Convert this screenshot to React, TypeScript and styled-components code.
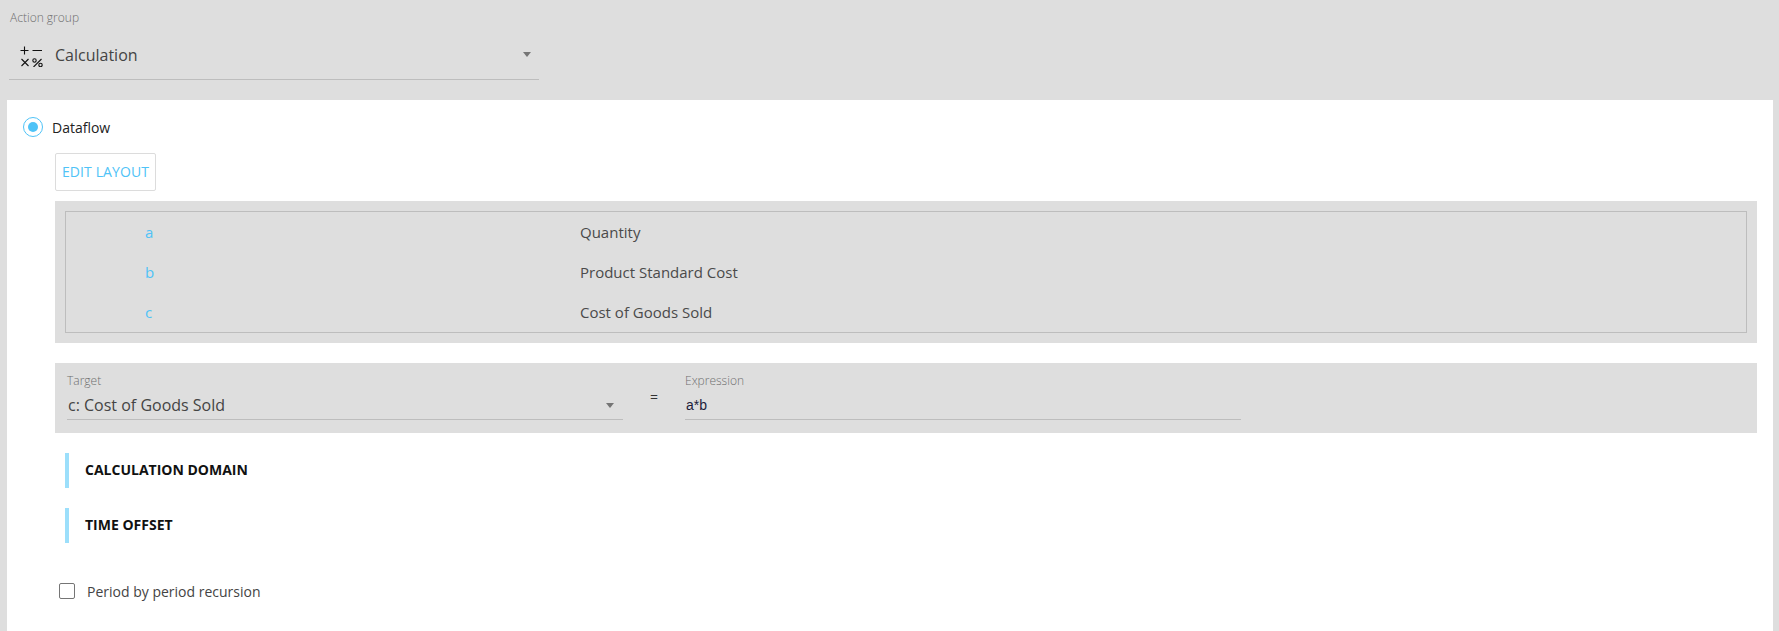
import React from 'react'
import styled, { createGlobalStyle } from 'styled-components'

const GlobalStyle = createGlobalStyle`
  html, body {
    margin: 0;
    padding: 0;
    height: 100%;
    background: #dedede;
    overflow: hidden;
  }
  body {
    font-family: "Open Sans", "Noto Sans", sans-serif;
  }
`

const Page = styled.div`
  display: flex;
  flex-direction: column;
  height: 631px;
  background: #dedede;
`

const Header = styled.div`
  height: 100px;
  flex-shrink: 0;
  padding: 9px 0 0 9px;
  box-sizing: border-box;
`

const FieldLabel = styled.div`
  height: 18px;
  font-size: 12px;
  line-height: 18px;
  font-weight: 300;
  color: #6f6f6f;
`

const HeaderLabel = styled(FieldLabel)`
  padding-left: 1px;
`

const GroupSelect = styled.div`
  display: flex;
  align-items: center;
  width: 530px;
  height: 53px;
  box-sizing: border-box;
  border-bottom: 1px solid #bdbdbd;
  padding: 3px 8px 0 11px;
`

const GroupName = styled.span`
  flex: 1;
  margin-left: 11px;
  font-size: 16px;
  color: #444;
`

const Caret = styled.span`
  width: 0;
  height: 0;
  border-left: 4.5px solid transparent;
  border-right: 4.5px solid transparent;
  border-top: 5px solid #757575;
`

const Panel = styled.div`
  flex: 1;
  margin: 0 6px 0 7px;
  padding-top: 16px;
  background: #fff;
`

const RadioRow = styled.label`
  display: flex;
  align-items: center;
  height: 20px;
  margin-left: 16px;
  padding-top: 1px;
  font-size: 14px;
  color: #222;
`

const RadioRing = styled.span`
  display: flex;
  align-items: center;
  justify-content: center;
  width: 20px;
  height: 20px;
  box-sizing: border-box;
  margin: -1px 9px 0 0;
  border: 1.5px solid #4fc3f7;
  border-radius: 50%;
`

const RadioDot = styled.span`
  width: 10px;
  height: 10px;
  border-radius: 50%;
  background: #4fc3f7;
`

const EditButton = styled.button`
  display: block;
  width: 101px;
  height: 38px;
  margin: 16px 0 0 48px;
  padding: 0 0 2px;
  background: #fff;
  border: 1px solid #dcdcdc;
  border-radius: 2px;
  font-family: inherit;
  font-size: 14px;
  letter-spacing: 0.1px;
  color: #4fc3f7;
`

const GrayBlock = styled.div`
  margin: 0 16px 0 48px;
  background: #dedede;
`

const VariablesBlock = styled(GrayBlock)`
  margin-top: 10px;
  padding: 10px;
`

const VariablesList = styled.div`
  border: 1px solid #bdbdbd;
`

const VariableRow = styled.div`
  display: grid;
  grid-template-columns: 435px 1fr;
  align-items: center;
  height: 40px;
  padding-left: 79px;
  font-size: 15px;
`

const VariableKey = styled.span`
  color: #4fc3f7;
`

const VariableName = styled.span`
  color: #4a4a4a;
`

const ExpressionBlock = styled(GrayBlock)`
  display: flex;
  height: 70px;
  margin-top: 20px;
  padding: 9px 0 0 12px;
  box-sizing: border-box;
`

const Field = styled.div`
  display: flex;
  flex-direction: column;
  width: 556px;
`

const FieldControl = styled.div`
  display: flex;
  align-items: center;
  justify-content: space-between;
  height: 30px;
  box-sizing: border-box;
  border-bottom: 1px solid #bdbdbd;
  padding: 1px 9px 0 1px;
`

const TargetValue = styled.span`
  font-size: 16px;
  color: #444;
`

const ExpressionValue = styled.span`
  font-family: "Liberation Sans", Arial, sans-serif;
  font-size: 14px;
  color: #1c1c3a;
`

const EqualsSign = styled.div`
  width: 62px;
  padding-top: 15px;
  text-align: center;
  font-size: 14px;
  line-height: 20px;
  color: #333;
`

const SectionTitle = styled.div`
  display: flex;
  align-items: center;
  height: 35px;
  margin: 20px 0 0 58px;
  padding: 0 0 2px 16px;
  box-sizing: border-box;
  border-left: 4px solid #9cdffb;
  font-size: 14px;
  font-weight: 700;
  color: #111;
`

const CheckRow = styled.label`
  display: flex;
  align-items: center;
  height: 16px;
  margin: 40px 0 0 52px;
  font-size: 14px;
  color: #444;
`

const CheckBox = styled.span`
  width: 16px;
  height: 16px;
  box-sizing: border-box;
  margin-right: 12px;
  border: 1px solid #757575;
  border-radius: 2px;
`

const variables = [
  { key: 'a', name: 'Quantity' },
  { key: 'b', name: 'Product Standard Cost' },
  { key: 'c', name: 'Cost of Goods Sold' },
]

function CalcIcon() {
  return (
    <svg width="24" height="24" viewBox="0 0 24 24" fill="none" stroke="#111" strokeWidth="1.1">
      <path d="M0.5 7.5h8M4.5 3.5v8M12.5 7.5h9.5" />
      <path d="M1.5 16l7 7M8.5 16l-7 7" />
      <circle cx="14.5" cy="17.5" r="1.7" />
      <circle cx="20.5" cy="22" r="1.7" />
      <path d="M21.5 16l-8 8" />
    </svg>
  )
}

export default function App() {
  return (
    <Page>
      <GlobalStyle />
      <Header>
        <HeaderLabel>Action group</HeaderLabel>
        <GroupSelect>
          <CalcIcon />
          <GroupName>Calculation</GroupName>
          <Caret />
        </GroupSelect>
      </Header>
      <Panel>
        <RadioRow>
          <RadioRing>
            <RadioDot />
          </RadioRing>
          Dataflow
        </RadioRow>
        <EditButton>EDIT LAYOUT</EditButton>
        <VariablesBlock>
          <VariablesList>
            {variables.map((v) => (
              <VariableRow key={v.key}>
                <VariableKey>{v.key}</VariableKey>
                <VariableName>{v.name}</VariableName>
              </VariableRow>
            ))}
          </VariablesList>
        </VariablesBlock>
        <ExpressionBlock>
          <Field>
            <FieldLabel>Target</FieldLabel>
            <FieldControl>
              <TargetValue>c: Cost of Goods Sold</TargetValue>
              <Caret />
            </FieldControl>
          </Field>
          <EqualsSign>=</EqualsSign>
          <Field>
            <FieldLabel>Expression</FieldLabel>
            <FieldControl>
              <ExpressionValue>a*b</ExpressionValue>
            </FieldControl>
          </Field>
        </ExpressionBlock>
        <SectionTitle>CALCULATION DOMAIN</SectionTitle>
        <SectionTitle>TIME OFFSET</SectionTitle>
        <CheckRow>
          <CheckBox />
          Period by period recursion
        </CheckRow>
      </Panel>
    </Page>
  )
}
